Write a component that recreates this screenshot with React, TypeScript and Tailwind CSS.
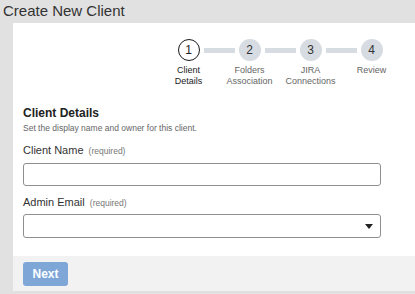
const steps = [
  { n: 1, label: ["Client", "Details"], active: true },
  { n: 2, label: ["Folders", "Association"], active: false },
  { n: 3, label: ["JIRA", "Connections"], active: false },
  { n: 4, label: ["Review"], active: false },
];

function Stepper() {
  return (
    <div className="ml-[145px] w-[244px]">
      <div className="flex items-center pl-[19.5px]">
        {steps.map((s, i) => (
          <div key={s.n} className="flex items-center">
            <div
              className={
                s.active
                  ? "flex h-[22px] w-[22px] items-center justify-center rounded-full border-[1.5px] border-[#1a1a1a] bg-white text-[12px] text-[#222]"
                  : "flex h-[22px] w-[22px] items-center justify-center rounded-full bg-[#d6dce1] text-[12px] text-[#333]"
              }
            >
              {s.n}
            </div>
            {i < steps.length - 1 && <div className="mx-[4px] h-[5px] w-[31px] bg-[#d6dce1]" />}
          </div>
        ))}
      </div>
      <div className="mt-[4px] flex">
        {steps.map((s) => (
          <div
            key={s.n}
            className={
              s.active
                ? "w-[61px] text-center text-[9px] leading-[11px] text-[#222]"
                : "w-[61px] text-center text-[9px] leading-[11px] text-[#666]"
            }
          >
            {s.label.map((l) => (
              <div key={l}>{l}</div>
            ))}
          </div>
        ))}
      </div>
    </div>
  );
}

function FieldLabel({ text }: { text: string }) {
  return (
    <div className="text-[11px] leading-[13px] text-[#333]">
      {text} <span className="ml-[2px] text-[8.5px] text-[#777]">(required)</span>
    </div>
  );
}

export default function App() {
  return (
    <div className="h-[294px] w-[415px] overflow-hidden bg-[#e1e1e1] font-['Liberation_Sans',Arial,sans-serif]">
      <h1 className="pl-[3px] pt-[1px] text-[15px] leading-[20px] text-[#333]">Create New Client</h1>
      <div className="ml-[13px] mt-[2px] bg-white pt-[16px]">
        <Stepper />
        <div className="px-[10px] pt-[19px]">
          <div className="text-[12px] font-bold leading-[14px] text-[#222]">Client Details</div>
          <div className="mt-[3px] text-[8.5px] leading-[10px] text-[#666]">
            Set the display name and owner for this client.
          </div>
          <div className="mt-[11px]">
            <FieldLabel text="Client Name" />
            <input className="mt-[5px] block h-[23px] w-[358px] rounded-[3px] border border-[#8f8f8f] bg-white px-2 text-[12px] outline-none" />
          </div>
          <div className="mt-[10px]">
            <FieldLabel text="Admin Email" />
            <div className="mt-[4px] flex h-[24px] w-[358px] items-center justify-end rounded-[3px] border border-[#8f8f8f] bg-white pr-[7px]">
              <svg width="8" height="5" viewBox="0 0 8 5">
                <path d="M0 0h8L4 5z" fill="#222" />
              </svg>
            </div>
          </div>
        </div>
        <div className="mt-[18px] flex h-[35px] items-center bg-[#f2f2f2] px-[10px]">
          <button className="h-[24px] w-[45px] rounded-[3px] bg-[#7ea7d8] text-[12px] font-bold text-white">
            Next
          </button>
        </div>
      </div>
    </div>
  );
}
